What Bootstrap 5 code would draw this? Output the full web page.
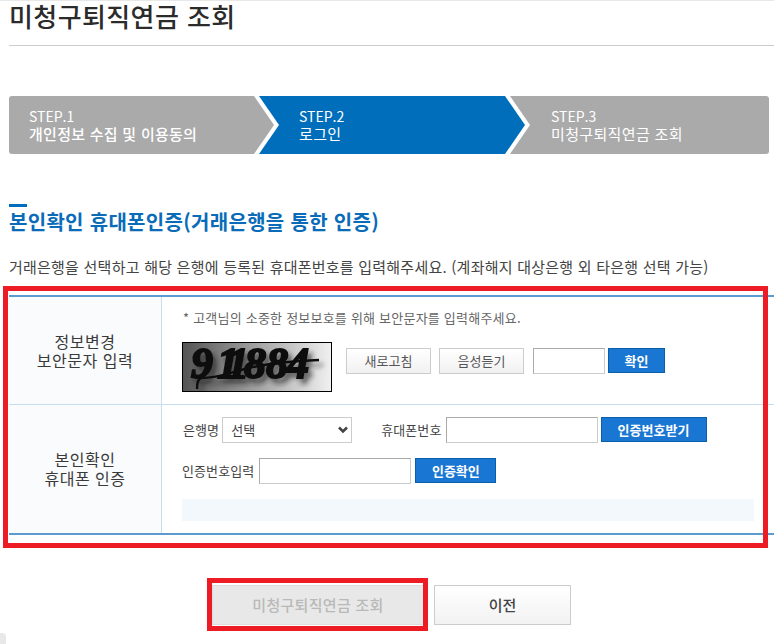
<!DOCTYPE html>
<html lang="ko">
<head>
<meta charset="utf-8">
<title>미청구퇴직연금 조회</title>
<link href="https://cdn.jsdelivr.net/npm/bootstrap@5.3.0/dist/css/bootstrap.min.css" rel="stylesheet">
<style>
html,body{height:644px;overflow:hidden}
body{font-family:"Noto Sans CJK KR","Liberation Sans",sans-serif;color:#444;background:#fff;font-size:13px;position:relative}
.page-wrap{border-top:1px solid #e8e8e8;padding-left:9px;width:774px}
.page-title{font-size:26px;line-height:30px;font-weight:500;color:#2b2b2b;margin:0;height:45px;border-bottom:1px solid #ccc;letter-spacing:.4px}
.steps{display:flex;margin-top:50px;height:58px;width:760px;font-size:15px;line-height:18px;color:#fff}
.step-item{position:relative;height:58px;display:flex;flex-direction:column;justify-content:center;background:#fff;margin-right:-20px}
.step-item::before{content:"";position:absolute;inset:0;z-index:0}
.step-item span{position:relative;z-index:1;display:block;letter-spacing:.35px;white-space:nowrap}
.step-item span.step-no{letter-spacing:0;font-size:14px}
.step-a{width:270px;padding-left:20px;z-index:3;clip-path:polygon(0 0,250px 0,270px 50%,250px 100%,0 100%)}
.step-a::before{background:#aaa;border-radius:3px 0 0 3px;clip-path:polygon(0 0,245px 0,265px 50%,245px 100%,0 100%)}
.step-b{width:271px;padding-left:40px;z-index:2;clip-path:polygon(0 0,251px 0,271px 50%,251px 100%,0 100%)}
.step-b::before{background:#006ebb;clip-path:polygon(0 0,246px 0,266px 50%,246px 100%,0 100%)}
.step-c{width:259px;padding-left:41px;margin-right:0;z-index:1}
.step-c::before{background:#aaa;border-radius:0 3px 3px 0}
.step-item span.step-strong{font-weight:500;letter-spacing:.27px}
.sec-title{margin:50px 0 0;color:#0a6cb8;font-size:20px;line-height:30px;font-weight:700;position:relative;padding-top:3px;letter-spacing:.3px}
.sec-bar{display:block;width:18px;height:3px;background:#006ebb;position:absolute;left:0;top:0}
.sec-desc{margin:20px 0 0;font-size:15px;line-height:20px;color:#444;letter-spacing:.23px;white-space:nowrap}
.form-tbl{margin-top:18px;width:765px;border-top:2px solid #5b9bd0;border-bottom:2px solid #5b9bd0}
.tbl-row{display:flex}
.tbl-row+.tbl-row{border-top:1px solid #c8deee}
.row-one{height:107px}
.row-two{height:129px}
.tbl-head{width:153px;flex:none;background:#f9fbfd;border-right:1px solid #c8deee;display:flex;align-items:center;justify-content:center;text-align:center;font-size:16px;line-height:19px;font-weight:400;color:#3a3a3a;letter-spacing:.5px}
.tbl-body{flex:1;padding-left:20px;position:relative}
.note{font-size:13px;line-height:18px;color:#666;margin:0;padding-top:12px;padding-left:1px;letter-spacing:.22px}
.captcha-line{display:flex;align-items:flex-start;margin-top:15px}
.captcha-box{width:150px;height:50px;border:1px solid #000;background:linear-gradient(90deg,#555,#f0f0f0);display:block;flex:none}
.cap-btns{margin-top:6px}
.btn.btn-light-x,.btn.btn-blue-x{height:26px;padding:0;font-size:13px;line-height:22px;border-radius:0}
.btn.btn-light-x{width:85px;background:linear-gradient(#fff,#f1f1f1);border:1px solid #ccc;color:#555}
.btn.btn-blue-x{height:25px;background:#1976d2;border:1px solid #0a5fa8;color:#fff;font-weight:700}
.ctl{height:26px;border-radius:0;border:1px solid #ccc;border-top-color:#aaa;border-left-color:#aaa;padding:0 8px;font-size:13px;color:#444}
.field-label{font-size:13px;line-height:26px;color:#444;letter-spacing:.1px;white-space:nowrap}
.form-select.ctl{width:130px;border:1px solid #ccc;padding:0 8px;background-image:url("data:image/svg+xml,%3csvg xmlns='http://www.w3.org/2000/svg' viewBox='0 0 10 8'%3e%3cpath fill='none' stroke='%23444' stroke-width='2.6' d='M1 1.5l4 4 4-4'/%3e%3c/svg%3e");background-size:10px 8px;background-position:right 3px center;color:#444}
.form-line{display:flex;align-items:flex-start}
.band{width:572px;height:22px;background:#f2f8fc;margin-top:15px}
.bottom-btns{display:flex;margin-top:50px;padding-left:203px}
.btn.btn-main-x{width:212px;height:40px;padding:0;border-radius:0;background:#e8e8e8;border:1px solid #ddd;color:#b9b9b9;font-size:15px;font-weight:500;opacity:1;letter-spacing:.3px}
.btn.btn-prev-x{width:137px;height:40px;padding:0;margin-left:10px;border-radius:0;background:linear-gradient(#fff,#f2f2f2);border:1px solid #ccc;color:#444;font-size:15px;font-weight:500}
.red-box{position:absolute;border:5px solid #ed1c24;pointer-events:none}
.red-a{left:3px;top:286px;width:765px;height:262px}
.red-b{left:207px;top:578px;width:221px;height:53px}
.corner-chip{position:absolute;left:0;top:633px;width:6px;height:11px;background:#e8e8e8;border-top-right-radius:4px}
.cap-digits{font-family:"Liberation Serif",serif;font-weight:700;font-style:italic;font-size:44px}
</style>
</head>
<body>
<div class="page-wrap">
  <h1 class="page-title">미청구퇴직연금 조회</h1>
  <div class="steps">
    <div class="step-item step-a"><span class="step-no">STEP.1</span><span class="step-strong">개인정보 수집 및 이용동의</span></div>
    <div class="step-item step-b"><span class="step-no">STEP.2</span><span>로그인</span></div>
    <div class="step-item step-c"><span class="step-no">STEP.3</span><span>미청구퇴직연금 조회</span></div>
  </div>
  <h2 class="sec-title"><i class="sec-bar"></i>본인확인 휴대폰인증(거래은행을 통한 인증)</h2>
  <p class="sec-desc">거래은행을 선택하고 해당 은행에 등록된 휴대폰번호를 입력해주세요. (계좌해지 대상은행 외 타은행 선택 가능)</p>
  <div class="form-tbl">
    <div class="tbl-row row-one">
      <div class="tbl-head">정보변경<br>보안문자 입력</div>
      <div class="tbl-body">
        <p class="note">* 고객님의 소중한 정보보호를 위해 보안문자를 입력해주세요.</p>
        <div class="captcha-line">
          <svg class="captcha-box" viewBox="0 0 148 48" role="img" aria-label="보안문자">
            <defs><filter id="cb" x="-10%" y="-30%" width="125%" height="170%"><feDropShadow dx="4" dy="5" stdDeviation="2.4" flood-color="#222" flood-opacity=".6"/></filter></defs>
            <g filter="url(#cb)" fill="#111" stroke="#111">
              <text class="cap-digits" x="8 34 44 61 83 104" y="35" stroke-width="2">911884</text>
              <path d="M14 46C14 40 15 36 18 35 38 35 50 28 70 24S112 18 136 17" fill="none" stroke-width="2.4"/>
            </g>
          </svg>
          <div class="d-flex cap-btns">
            <button type="button" class="btn btn-light-x" style="margin-left:14px">새로고침</button>
            <button type="button" class="btn btn-light-x" style="margin-left:8px">음성듣기</button>
            <input type="text" class="form-control ctl" style="width:72px;margin-left:9px" aria-label="보안문자">
            <button type="button" class="btn btn-blue-x" style="width:57px;margin-left:3px">확인</button>
          </div>
        </div>
      </div>
    </div>
    <div class="tbl-row row-two">
      <div class="tbl-head">본인확인<br>휴대폰 인증</div>
      <div class="tbl-body">
        <div class="form-line" style="margin-top:12px">
          <span class="field-label" style="margin-left:1px">은행명</span>
          <select class="form-select ctl" style="margin-left:3px" aria-label="은행명"><option>선택</option></select>
          <span class="field-label" style="margin-left:29px">휴대폰번호</span>
          <input type="text" class="form-control ctl" style="width:152px;margin-left:4px" aria-label="휴대폰번호">
          <button type="button" class="btn btn-blue-x" style="width:106px;margin-left:3px">인증번호받기</button>
        </div>
        <div class="form-line" style="margin-top:15px">
          <span class="field-label">인증번호입력</span>
          <input type="text" class="form-control ctl" style="width:152px;margin-left:5px" aria-label="인증번호">
          <button type="button" class="btn btn-blue-x" style="width:81px;margin-left:4px">인증확인</button>
        </div>
        <div class="band"></div>
      </div>
    </div>
  </div>
  <div class="bottom-btns">
    <button type="button" class="btn btn-main-x" disabled>미청구퇴직연금 조회</button>
    <button type="button" class="btn btn-prev-x">이전</button>
  </div>
</div>
<div class="red-box red-a"></div>
<div class="red-box red-b"></div>
<div class="corner-chip"></div>
<script src="https://cdn.jsdelivr.net/npm/bootstrap@5.3.0/dist/js/bootstrap.bundle.min.js"></script>
</body>
</html>
